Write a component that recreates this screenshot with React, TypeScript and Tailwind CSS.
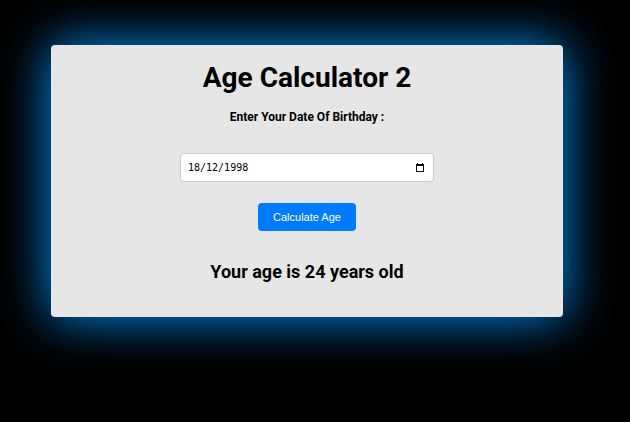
import { useState, type FormEvent } from "react";

function ageOn(date: Date, birthday: string) {
  const [day, month, year] = birthday.split("/").map(Number);
  const hadBirthday =
    date.getMonth() + 1 > month || (date.getMonth() + 1 === month && date.getDate() >= day);
  return date.getFullYear() - year - (hadBirthday ? 0 : 1);
}

function CalendarIcon() {
  return (
    <svg viewBox="0 0 10 10" className="h-2.5 w-2.5" aria-hidden="true" shapeRendering="crispEdges">
      <path
        fill="#101010"
        d="M2 0h1v1h4V0h1v1h1v8H1V1h1zM2 3v5h6V3z"
      />
    </svg>
  );
}

export default function App() {
  const [birthday, setBirthday] = useState("18/12/1998");
  const [age, setAge] = useState(24);

  const calculate = (event: FormEvent) => {
    event.preventDefault();
    setAge(ageOn(new Date(), birthday));
  };

  return (
    <div className="min-h-screen bg-black pt-[45px] pr-4 pb-12 font-['Roboto',sans-serif] text-black">
      <main className="mx-auto w-full max-w-lg rounded bg-[#e6e6e6] px-4 pt-4 pb-8 text-center shadow-[0_0_50px_#0095ff]">
        <h1 className="text-[28px] leading-[34px] font-bold">Age Calculator 2</h1>
        <form onSubmit={calculate} className="mt-3.5 flex flex-col items-center">
          <label htmlFor="birthday" className="text-xs leading-4 font-bold">
            Enter Your Date Of Birthday :
          </label>
          <div className="mt-7 flex h-[29px] w-full max-w-[254px] items-center rounded border border-[#cccccc] bg-white pr-2 pl-[7px]">
            <input
              id="birthday"
              type="text"
              value={birthday}
              onChange={(event) => setBirthday(event.target.value)}
              className="min-w-0 flex-1 bg-transparent font-['DejaVu_Sans_Mono',monospace] text-[10px] leading-4 outline-none"
            />
            <button type="button" aria-label="Open calendar">
              <CalendarIcon />
            </button>
          </div>
          <button
            type="submit"
            className="mt-[21px] rounded bg-[#007bff] px-[15px] py-1.5 font-['Liberation_Sans',sans-serif] text-[11px] leading-4 text-white"
          >
            Calculate Age
          </button>
        </form>
        <h2 className="mt-7 text-lg leading-[26px] font-bold">Your age is {age} years old</h2>
      </main>
    </div>
  );
}
